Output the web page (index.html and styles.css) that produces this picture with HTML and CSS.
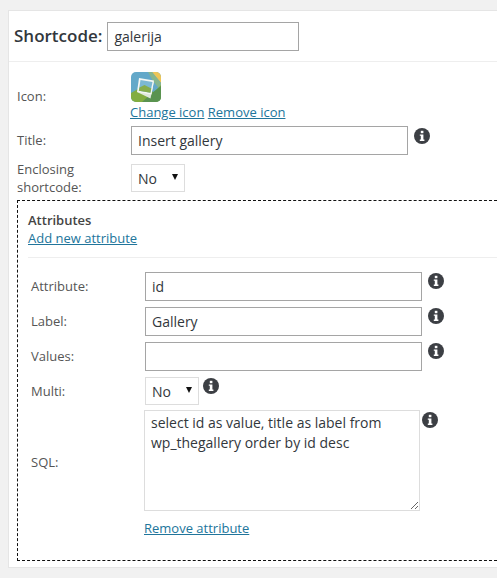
FILE: index.html
```html
<!DOCTYPE html>
<html>
<head>
    <title>Shortcode</title>
    <link rel="stylesheet" href="styles.css">
</head>
<body>
    <div class="panel">
        <div class="panel-head">
            <label class="head-label" for="tag">Shortcode:</label>
            <input class="text head-input" id="tag" type="text" value="galerija">
        </div>

        <div class="panel-body">
            <div class="row row-icon">
                <div class="label">Icon:</div>
                <div class="icon-field">
                    <svg class="app-icon" width="30" height="30" viewBox="0 0 30 30">
                        <defs><clipPath id="rounded"><rect width="30" height="30" rx="5"/></clipPath></defs>
                        <g clip-path="url(#rounded)">
                            <rect width="30" height="30" fill="#63a8c9"/>
                            <path d="M21 0h9v11z" fill="#edc557"/>
                            <path d="M17 0h4l9 11v8L22 9z" fill="#86b68e"/>
                            <path d="M0 21l7-4 16 3 7-7v17H0z" fill="#82ad40"/>
                            <path d="M11 30l10-9 9-7v16z" fill="#5a9350"/>
                            <path d="M6 20l13.500 6.500 3.500-17z" fill="#dfe8dc"/>
                            <path d="M8 6l15 2.500-2.500 14L6 20z" fill="#f5f7f3"/>
                            <path d="M9.500 8l12 2-2.100 10.800L7.800 18.800z" fill="#7cb8d3"/>
                            <path d="M8.500 15.500l5-2.500 6.800 3.500-.9 4.300-11.600-2z" fill="#86ad4c"/>
                        </g>
                    </svg>
                    <div class="icon-links"><a href="#">Change icon</a> <a href="#">Remove icon</a></div>
                </div>
            </div>

            <div class="row row-title">
                <div class="label">Title:</div>
                <input class="text" type="text" value="Insert gallery">
                <svg class="info" width="16" height="16" viewBox="0 0 16 16"><circle cx="8" cy="8" r="8"/><rect x="6.800" y="2.800" width="2.600" height="2.400" fill="#fff"/><path d="M5.800 6.500h3.600v5.100h1v1.300H5.800v-1.300h1V7.800h-1z" fill="#fff"/></svg>
            </div>

            <div class="row row-enclosing">
                <div class="label">Enclosing shortcode:</div>
                <div class="select-wrap">
                    <select class="select"><option>No</option><option>Yes</option></select>
                </div>
            </div>

            <div class="attributes">
                <div class="attr-head">
                    <div class="attr-title">Attributes</div>
                    <a href="#">Add new attribute</a>
                </div>

                <div class="attr-body">
                    <div class="row">
                        <div class="label">Attribute:</div>
                        <input class="text" type="text" value="id">
                        <svg class="info" width="16" height="16" viewBox="0 0 16 16"><circle cx="8" cy="8" r="8"/><rect x="6.800" y="2.800" width="2.600" height="2.400" fill="#fff"/><path d="M5.800 6.500h3.600v5.100h1v1.300H5.800v-1.300h1V7.800h-1z" fill="#fff"/></svg>
                    </div>
                    <div class="row">
                        <div class="label">Label:</div>
                        <input class="text" type="text" value="Gallery">
                        <svg class="info" width="16" height="16" viewBox="0 0 16 16"><circle cx="8" cy="8" r="8"/><rect x="6.800" y="2.800" width="2.600" height="2.400" fill="#fff"/><path d="M5.800 6.500h3.600v5.100h1v1.300H5.800v-1.300h1V7.800h-1z" fill="#fff"/></svg>
                    </div>
                    <div class="row">
                        <div class="label">Values:</div>
                        <input class="text" type="text" value="">
                        <svg class="info" width="16" height="16" viewBox="0 0 16 16"><circle cx="8" cy="8" r="8"/><rect x="6.800" y="2.800" width="2.600" height="2.400" fill="#fff"/><path d="M5.800 6.500h3.600v5.100h1v1.300H5.800v-1.300h1V7.800h-1z" fill="#fff"/></svg>
                    </div>
                    <div class="row row-multi">
                        <div class="label">Multi:</div>
                        <div class="select-wrap">
                            <select class="select"><option>No</option><option>Yes</option></select>
                        </div>
                        <svg class="info info-multi" width="16" height="16" viewBox="0 0 16 16"><circle cx="8" cy="8" r="8"/><rect x="6.800" y="2.800" width="2.600" height="2.400" fill="#fff"/><path d="M5.800 6.500h3.600v5.100h1v1.300H5.800v-1.300h1V7.800h-1z" fill="#fff"/></svg>
                    </div>
                    <div class="row row-sql">
                        <div class="label">SQL:</div>
                        <textarea class="sql">select id as value, title as label from wp_thegallery order by id desc</textarea>
                        <svg class="info info-sql" width="16" height="16" viewBox="0 0 16 16"><circle cx="8" cy="8" r="8"/><rect x="6.800" y="2.800" width="2.600" height="2.400" fill="#fff"/><path d="M5.800 6.500h3.600v5.100h1v1.300H5.800v-1.300h1V7.800h-1z" fill="#fff"/></svg>
                    </div>
                    <a class="remove" href="#">Remove attribute</a>
                </div>
            </div>
        </div>
    </div>
</body>
</html>
```

FILE: styles.css
```css
html, body { margin: 0; height: 100%; }
body { box-sizing: border-box; padding: 10px 0 0 8px; background: #f1f1f1; color: #555; font-family: "Open Sans", sans-serif; font-size: 13px; line-height: 18px; }
a { color: #21759b; }

.panel { background: #fff; border: 1px solid #e5e5e5; border-right: none; height: 558px; box-sizing: border-box; }
.panel-head { display: flex; align-items: center; height: 51px; padding: 0 0 0 5px; border-bottom: 1px solid #eee; box-sizing: border-box; }
.head-label { font-size: 17px; font-weight: 600; color: #32373c; margin-right: 5px; }
.text { box-sizing: border-box; width: 277px; height: 29px; margin: 0; padding: 0 6px; border: 1px solid #a5a5a5; border-radius: 0; background: #fff; color: #32373c; font-family: "Open Sans", sans-serif; font-size: 14px; outline: none; }
.head-input { width: 192px; }

.panel-body { padding: 10px 0 0 8px; }
.row { display: flex; align-items: flex-start; }
.label { width: 114px; flex: none; align-self: center; padding-bottom: 2px; }
.icon-field { display: flex; flex-direction: column; }
.app-icon { display: block; }
.icon-links { margin: 0 0 0 -1px; height: 24px; line-height: 20px; }
.row-icon .label { padding-bottom: 6px; }
.row-title .info { margin-top: 2px; }
.row-enclosing { margin-top: 5px; }
.row-enclosing .label { width: 100px; margin-right: 14px; padding-bottom: 0; }
.row-enclosing .select-wrap { align-self: center; }
.row-multi .label { padding-bottom: 0; }
.row-sql .label { padding: 2px 0 0; }

.info { flex: none; margin: 1px 0 0 6px; fill: #3c3f44; }
.info-multi { margin-left: 4px; }
.info-sql { margin: 2px 0 0 2px; }

.select-wrap { position: relative; width: 54px; height: 28px; flex: none; }
.select-wrap::after { content: ""; position: absolute; left: 41px; top: 10px; border-left: 3.500px solid transparent; border-right: 3.500px solid transparent; border-top: 6px solid #111; pointer-events: none; }
.select { appearance: none; box-sizing: border-box; width: 100%; height: 28px; margin: 0; padding: 0 6px; border: 1px solid #ddd; border-radius: 0; background: #fff; color: #32373c; font-family: "Open Sans", sans-serif; font-size: 14px; outline: none; }

.attributes { margin-top: 4px; height: 361px; box-sizing: border-box; border: 1px dashed #111; border-right: none; }
.attr-head { margin-left: 10px; padding-top: 10px; height: 57px; box-sizing: border-box; border-bottom: 1px solid #eee; }
.attr-title { font-weight: 600; color: #444; }
.attr-body { padding: 14px 0 0 13px; }
.attr-body .row { margin-bottom: 6px; }
.attr-body .row-sql { margin-top: -1px; margin-bottom: 0; }
.sql { box-sizing: border-box; width: 276px; height: 101px; margin: 0 0 0 -1px; padding: 2px 6px; border: 1px solid #ddd; border-radius: 0; background: #fff; color: #32373c; font-family: "Open Sans", sans-serif; font-size: 14px; line-height: 20px; outline: none; }
.remove { display: block; margin: 8px 0 0 113px; }
```
